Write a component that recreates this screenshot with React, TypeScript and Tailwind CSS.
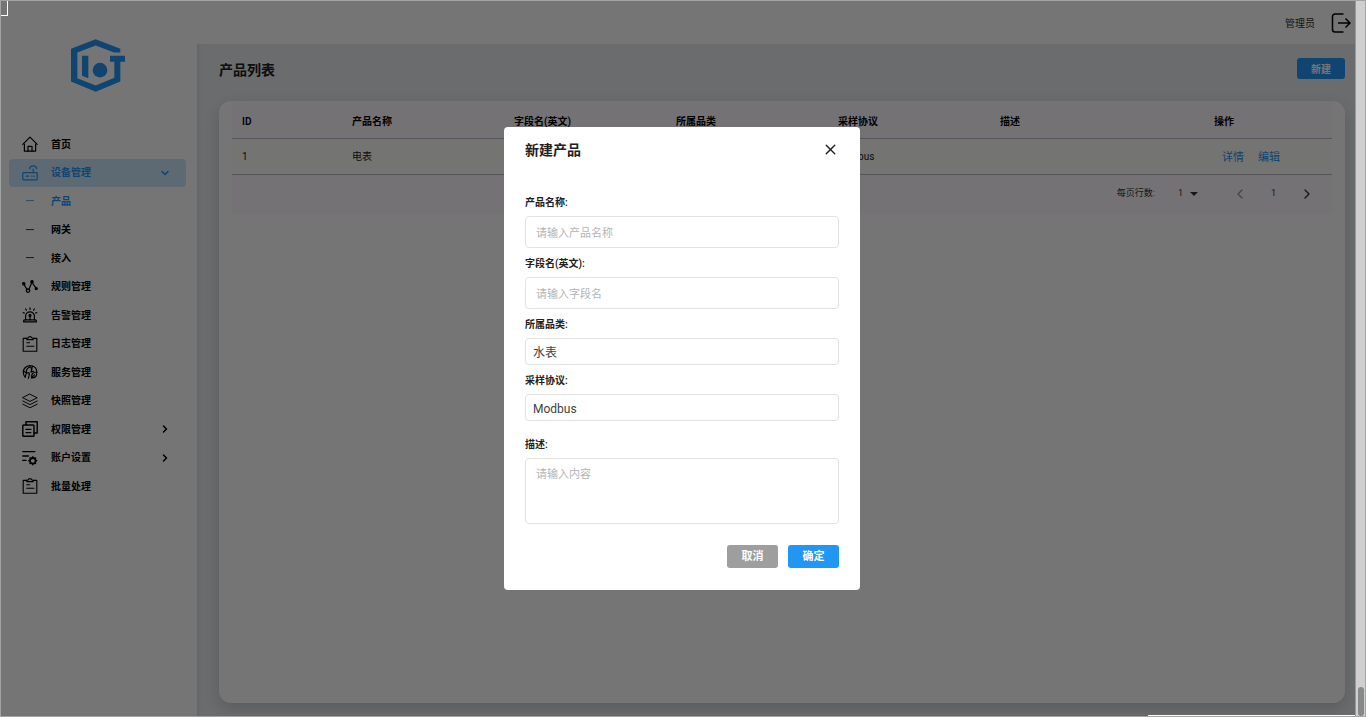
import { useState, type ReactNode } from 'react'
import { ChevronDown, ChevronLeft, ChevronRight, X } from 'lucide-react'

type MenuItem = {
  label: string
  icon: ReactNode
  active?: boolean
  selected?: boolean
  arrow?: 'down' | 'right'
}

function Icon({ children, width = 1.5 }: { children: ReactNode; width?: number }) {
  return (
    <svg
      viewBox="0 0 20 20"
      className="size-4"
      fill="none"
      stroke="currentColor"
      strokeWidth={width}
      strokeLinecap="round"
      strokeLinejoin="round"
      aria-hidden="true"
    >
      {children}
    </svg>
  )
}

const dash = (
  <Icon width={1}>
    <path d="M5.500 9.500h9" />
  </Icon>
)

const clipboard = (
  <Icon width={1.4}>
    <path d="M6 3H1.500v16h17V3H14" />
    <path d="M6 4.500V3.200c0-.5.3-.7.8-.7h1C8 1.300 9 .8 10 .8s2 .5 2.200 1.700h1c.5 0 .8.200.8.7v1.300z" />
    <path d="M6 8.500h3.500M6 12.800h9" />
  </Icon>
)

const menu: MenuItem[] = [
  {
    label: '首页',
    icon: (
      <Icon>
        <path d="M1 10.500 10 1.500l9 9" />
        <path d="M3 10v9h14v-9" />
        <path d="M7.500 19v-6h5v6" />
      </Icon>
    ),
  },
  {
    label: '设备管理',
    active: true,
    arrow: 'down',
    icon: (
      <Icon>
        <rect x="1" y="9.500" width="18" height="9" rx="1" />
        <path d="M5 14h3.500M12 14h.5M15 14h.5M14 9.500V5" />
        <path d="M9.500 4.500c.5-2.200 2.200-3.500 4.500-3.500s4 1.300 4.500 3.500" />
      </Icon>
    ),
  },
  { label: '产品', icon: dash, selected: true },
  { label: '网关', icon: dash },
  { label: '接入', icon: dash },
  {
    label: '规则管理',
    icon: (
      <Icon>
        <path d="m2.500 7 4 6.500M8.500 13 12 5M13 5l4.500 6.500" />
        <circle cx="2.200" cy="6" r="1.500" fill="currentColor" />
        <circle cx="12.500" cy="3.500" r="1.500" fill="currentColor" />
        <circle cx="17.800" cy="12" r="1.300" fill="currentColor" />
        <circle cx="7.500" cy="14.500" r="2.200" />
      </Icon>
    ),
  },
  {
    label: '告警管理',
    icon: (
      <Icon>
        <path d="M4.500 16v-4.500a5.500 5.500 0 0 1 11 0V16" />
        <path d="M2 18.500v-1c0-1 .5-1.500 1.500-1.500h13c1 0 1.500.5 1.500 1.500v1z" />
        <path d="M10 11.500V16M10 1v2M4.500 2.500l1 1.500M15.500 2.500l-1 1.500M1.500 7l1.500.5M18.500 7l-1.500.5" />
        <circle cx="10" cy="10.500" r="1.200" />
      </Icon>
    ),
  },
  { label: '日志管理', icon: clipboard },
  {
    label: '服务管理',
    icon: (
      <Icon>
        <path d="M8 18c1-3 1.500-5 1-7H5.500C5 8 7 5 10 3.500 12 5 12.500 7 11.500 10" />
        <path d="M4 16.500C1 13.500.8 8 3.500 5S10 1.500 13 2.500c3.500 1 5.500 4 5.500 7.500" />
        <path d="m4 16.500 1.500-5.500L2 9M13 2.500 11.500 10l3-1" />
        <path d="M12 17.500c-.5-5 1.500-7.500 6.500-7.500.3 5-1.500 7.500-6.500 7.500zM12 17.500l3.500-4" />
      </Icon>
    ),
  },
  {
    label: '快照管理',
    icon: (
      <Icon width={1.2}>
        <path d="m10 1.500 9 4.500-9 4.500L1 6z" />
        <path d="m1 10 9 4.500 9-4.500M1 14l9 4.500 9-4.500" />
      </Icon>
    ),
  },
  {
    label: '权限管理',
    arrow: 'right',
    icon: (
      <Icon width={1.8}>
        <rect x="1" y="5" width="14" height="14" rx="1" />
        <path d="M5 5V1h14v14h-4M5 10.500h6M5 14.500h6" />
      </Icon>
    ),
  },
  {
    label: '账户设置',
    arrow: 'right',
    icon: (
      <Icon width={1.8}>
        <path d="M1 2h15M1 7.500h7M1 13h4" />
        <circle cx="13.500" cy="13.500" r="3.500" strokeWidth="2.200" />
        <path d="M13.500 8.500v1M13.500 17.500v1M8.500 13.500h1M17.500 13.500h1M10 10l.7.7M16.300 16.300l.7.7M17 10l-.7.7M10.700 16.300l-.7.7" />
      </Icon>
    ),
  },
  { label: '批量处理', icon: clipboard },
]

function Logo() {
  return (
    <svg viewBox="213 118 162 158" className="h-[53px] w-[54px] text-[#2196f3]" fill="currentColor" role="img" aria-label="IoT">
      <path d="M213 147 287 118l74 29v11h-19l-55-21-55 21v77l55 22 56-23v-48h-13v-18h45v18h-14v59l-74 31-74-31z" />
      <path d="M246 168h19v67l-19-7z" />
      <circle cx="300" cy="211" r="22" />
    </svg>
  )
}

function Sidebar() {
  return (
    <aside className="flex w-[197px] shrink-0 flex-col bg-white">
      <div className="flex h-[130px] items-start justify-center pt-[39px] pr-0.5">
        <Logo />
      </div>
      <nav className="flex h-[370px] flex-col justify-between pr-[11px] pl-[9px]">
        {menu.map((item) => (
          <a
            key={item.label}
            href="#"
            className={`flex h-7 items-center rounded px-[13px] text-[10px] font-bold ${
              item.active ? 'bg-[#cbe7fd] text-[#2196f3]' : item.selected ? 'text-[#2196f3]' : 'text-black'
            }`}
          >
            {item.icon}
            <span className="ml-[13px] flex-1">{item.label}</span>
            {item.arrow === 'down' && <ChevronDown className="mr-0.5 size-3" strokeWidth={3} />}
            {item.arrow === 'right' && <ChevronRight className="mr-0.5 size-3" strokeWidth={3} />}
          </a>
        ))}
      </nav>
    </aside>
  )
}

function ProductTable() {
  return (
    <div className="bg-[#fff9fe]">
      <table className="w-full table-fixed text-left text-[10px] text-[#212121]">
        <colgroup>
          <col className="w-[110px]" />
          <col className="w-[162px]" />
          <col className="w-[162px]" />
          <col className="w-[162px]" />
          <col className="w-[162px]" />
          <col className="w-[162px]" />
          <col />
        </colgroup>
        <thead>
          <tr className="h-[37px] border-b border-[#bcb8c8] text-black">
            <th className="px-2.5 pt-1 font-semibold">ID</th>
            <th className="px-2.5 pt-1 font-semibold">产品名称</th>
            <th className="px-2.5 pt-1 font-semibold">字段名(英文)</th>
            <th className="px-2.5 pt-1 font-semibold">所属品类</th>
            <th className="px-2.5 pt-1 font-semibold">采样协议</th>
            <th className="px-2.5 pt-1 font-semibold">描述</th>
            <th className="pt-1 pl-[62px] font-semibold">操作</th>
          </tr>
        </thead>
        <tbody>
          <tr className="h-9 border-b border-[#bcb8c0] bg-[#fcfdfa]">
            <td className="px-2.5">1</td>
            <td className="px-2.5">电表</td>
            <td className="px-2.5" />
            <td className="px-2.5" />
            <td className="px-2.5">Modbus</td>
            <td className="px-2.5" />
            <td className="pt-1 pl-[70px] text-[11px] text-[#2196f3]">
              <a href="#">详情</a>
              <a href="#" className="ml-3.5">
                编辑
              </a>
            </td>
          </tr>
        </tbody>
      </table>
      <div className="flex h-[39px] items-center justify-end pr-[17px] text-[9px] text-[#333]">
        <label htmlFor="page-size">每页行数:</label>
        <div className="relative ml-[23px] flex w-5 items-center">
          <select id="page-size" className="w-full appearance-none bg-transparent">
            <option>1</option>
          </select>
          <svg viewBox="0 0 8 4" className="pointer-events-none absolute right-0 h-1 w-2" fill="currentColor">
            <path d="M0 0h8L4 4z" />
          </svg>
        </div>
        <button type="button" disabled aria-label="上一页" className="ml-[34px] text-[#999]">
          <ChevronLeft className="size-4" strokeWidth={2} />
        </button>
        <span className="mx-[23px]">1</span>
        <button type="button" aria-label="下一页">
          <ChevronRight className="size-4" strokeWidth={2} />
        </button>
      </div>
    </div>
  )
}

function ProductDialog({ onClose }: { onClose: () => void }) {
  const label = 'flex h-5 items-center text-[10px] font-semibold text-[#212121]'
  const control =
    'mt-1 block w-full rounded border border-[#e2e2e2] bg-white text-[#424242] outline-none placeholder:text-[#b5b5b5]'

  return (
    <div
      role="dialog"
      aria-modal="true"
      aria-labelledby="dialog-title"
      className="w-[356px] rounded bg-white px-[21px] pt-3 pb-[22px]"
    >
      <div className="flex h-5 items-center justify-between">
        <h2 id="dialog-title" className="pt-0.5 text-sm font-semibold text-[#212121]">
          新建产品
        </h2>
        <button type="button" onClick={onClose} aria-label="关闭" className="text-[#212121]">
          <X className="size-[17px]" strokeWidth={2} />
        </button>
      </div>
      <form className="mt-[33px]" onSubmit={(e) => e.preventDefault()}>
        <div className="flex flex-col gap-[5px]">
          <div>
            <label htmlFor="name" className={label}>产品名称:</label>
            <input id="name" placeholder="请输入产品名称" className={`${control} h-8 px-2.5 pt-0.5 text-[11px]`} />
          </div>
          <div>
            <label htmlFor="field" className={label}>字段名(英文):</label>
            <input id="field" placeholder="请输入字段名" className={`${control} h-8 px-2.5 pt-0.5 text-[11px]`} />
          </div>
          <div>
            <label htmlFor="category" className={label}>所属品类:</label>
            <select id="category" className={`${control} h-[27px] appearance-none px-[7px] pt-0.5 text-xs`}>
              <option>水表</option>
              <option>电表</option>
            </select>
          </div>
          <div>
            <label htmlFor="protocol" className={label}>采样协议:</label>
            <select id="protocol" className={`${control} h-[27px] appearance-none px-[7px] pt-0.5 text-xs`}>
              <option>Modbus</option>
            </select>
          </div>
          <div className="mt-2">
            <label htmlFor="desc" className={label}>描述:</label>
            <textarea
              id="desc"
              placeholder="请输入内容"
              className={`${control} h-[66px] resize-none px-2.5 py-2 text-[11px]`}
            />
          </div>
        </div>
        <div className="mt-[21px] flex justify-end gap-2.5 text-[11px] font-bold text-white">
          <button type="button" onClick={onClose} className="h-[23px] w-[51px] rounded-[3px] bg-[#9e9e9e] pt-0.5">
            取消
          </button>
          <button type="submit" className="h-[23px] w-[51px] rounded-[3px] bg-[#2196f3] pt-0.5">
            确定
          </button>
        </div>
      </form>
    </div>
  )
}

export default function App() {
  const [open, setOpen] = useState(true)

  return (
    <div className="relative flex h-screen overflow-hidden bg-white font-['Roboto','Noto_Sans_CJK_SC',sans-serif]">
      <Sidebar />
      <div className="flex min-w-0 flex-1 flex-col pr-[11px]">
        <header className="flex h-11 shrink-0 items-center justify-end gap-4 pt-0.5 pr-1 text-[10px] text-[#333]">
          <span>管理员</span>
          <button type="button" aria-label="退出登录" className="text-black">
            <svg viewBox="0 0 20 20" className="size-5" fill="none" stroke="currentColor" strokeWidth="1.500">
              <path d="M12.500 1H4a2.500 2.500 0 0 0-2.500 2.500v13A2.500 2.500 0 0 0 4 19h8.500M7 10h12M14.500 5.500 19 10l-4.500 4.500" />
            </svg>
          </button>
        </header>
        <main className="flex min-h-0 flex-1 flex-col bg-[#e7ecef] pr-[10px] pb-[14px] pl-[22px] shadow-[inset_4px_0_5px_-3px_#d2d6dc]">
          <div className="flex h-[57px] shrink-0 items-start justify-between pt-[14px]">
            <h1 className="text-sm leading-6 font-semibold text-[#212121]">产品列表</h1>
            <button
              type="button"
              onClick={() => setOpen(true)}
              className="h-[21px] w-12 rounded-[3px] bg-[#2196f3] pt-0.5 text-[10px] font-bold text-white"
            >
              新建
            </button>
          </div>
          <section className="flex-1 rounded-xl bg-white px-[13px] shadow-[0_6px_16px_#c3c7cc]">
            <ProductTable />
          </section>
        </main>
      </div>

      {open && (
        <div className="fixed inset-0 z-10 flex items-center justify-center bg-black/54 pr-0.5">
          <ProductDialog onClose={() => setOpen(false)} />
        </div>
      )}

      {/* window frame and scroll track stay above the backdrop */}
      <div className="pointer-events-none absolute inset-0 z-20 flex border border-[#a3a3a3]">
        <div className="flex-1">
          <div className="absolute top-0 left-0 h-[15px] w-[7px] border-r border-b border-white" />
          <div className="absolute right-[10px] bottom-0 h-px w-[207px] bg-white" />
        </div>
        <div className="flex w-[10px] items-end justify-center border-l border-[#999] bg-[#cfcfcf]">
          <div className="h-[29px] w-1.5 rounded-full bg-[#858989]" />
        </div>
      </div>
    </div>
  )
}
